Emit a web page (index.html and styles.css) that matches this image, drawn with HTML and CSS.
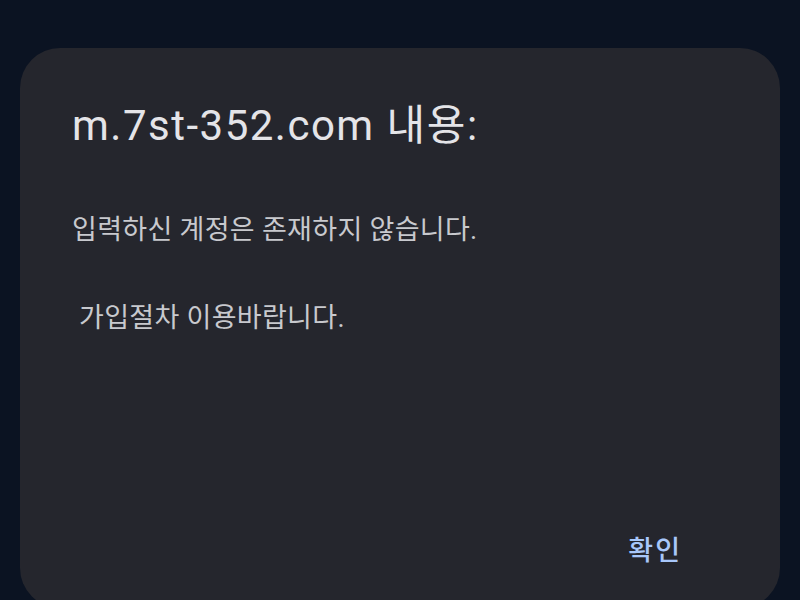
FILE: index.html
```html
<!DOCTYPE html>
<html lang="ko">

<head>
    <meta charset="UTF-8">
    <title>m.7st-352.com 내용</title>
    <link rel="stylesheet" href="styles.css">
</head>

<body>
    <div class="dialog">
        <h1 class="dialog-title">m.7st-352.com 내용:</h1>
        <p class="dialog-message">입력하신 계정은 존재하지 않습니다.

 가입절차 이용바랍니다.</p>
        <div class="dialog-actions">
            <button class="dialog-button">확인</button>
        </div>
    </div>
</body>

</html>
```

FILE: styles.css
```css
html,
body {
    margin: 0;
    height: 100%;
    overflow: hidden;
}

body {
    background-color: #0b1322;
    font-family: Roboto, "Noto Sans CJK KR", sans-serif;
    padding: 48px 20px 0;
    box-sizing: border-box;
}

.dialog {
    background-color: #25262d;
    border-radius: 40px;
    height: 560px;
    padding: 52px 52px 0;
    box-sizing: border-box;
    display: flex;
    flex-direction: column;
}

.dialog-title {
    margin: 0;
    font-size: 42px;
    font-weight: 400;
    line-height: 52px;
    letter-spacing: 1.5px;
    color: #e4e4e8;
}

.dialog-message {
    margin: 56px 0 0;
    font-size: 27px;
    line-height: 44px;
    letter-spacing: 0.3px;
    color: #c8c9ce;
    white-space: pre-wrap;
}

.dialog-actions {
    display: flex;
    justify-content: flex-end;
    margin-top: auto;
    padding: 0 46px 40px 0;
}

.dialog-button {
    background: none;
    border: 0;
    padding: 0;
    font-family: inherit;
    font-size: 27px;
    font-weight: 500;
    letter-spacing: 2px;
    color: #a8c7fa;
}
```
